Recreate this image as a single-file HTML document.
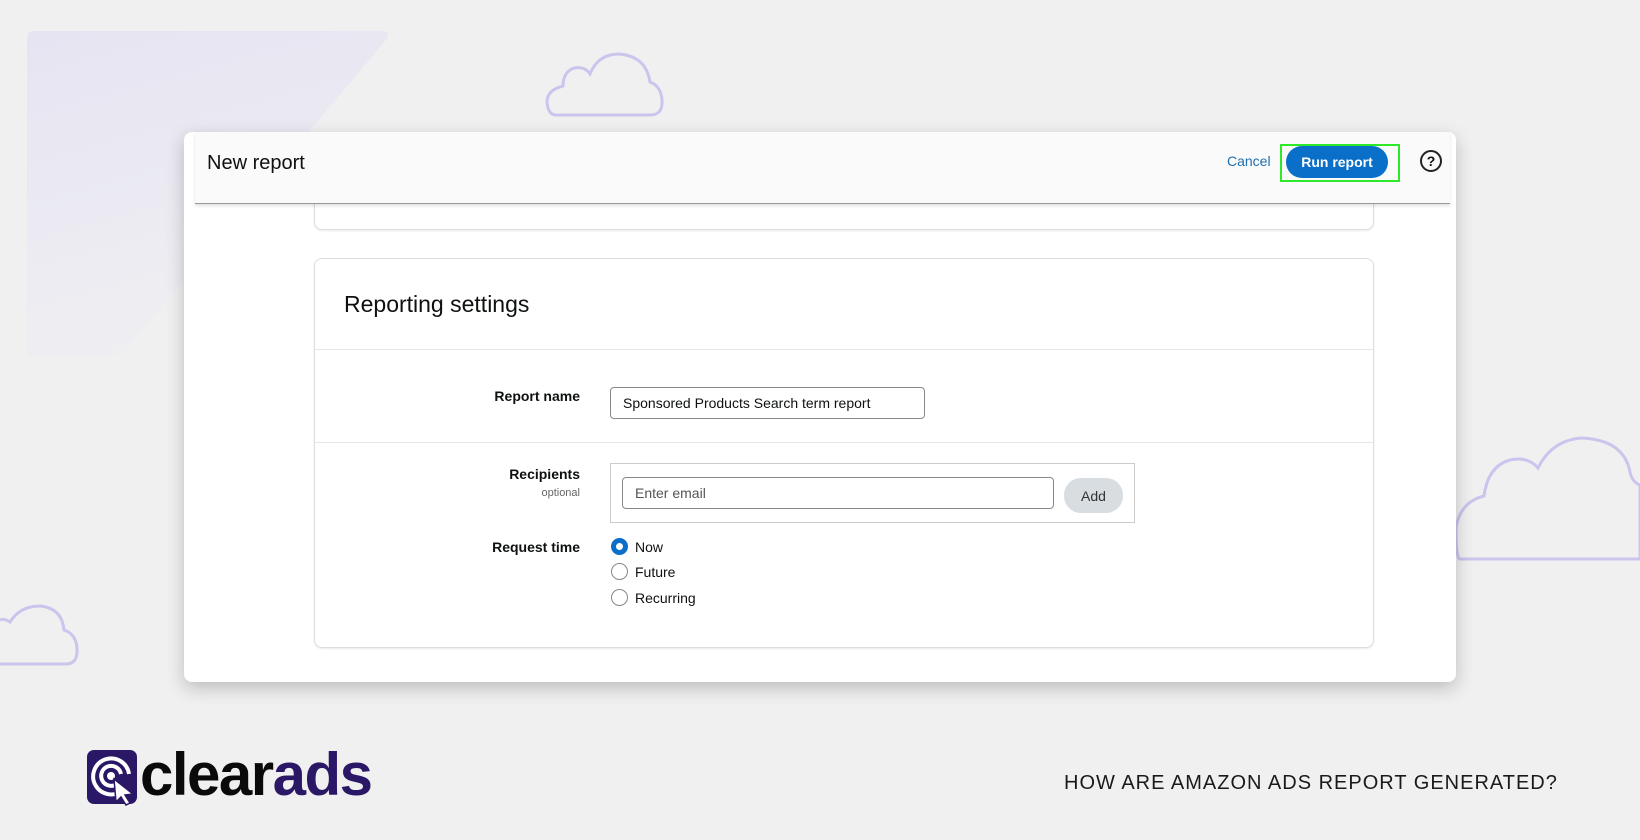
<!DOCTYPE html>
<html><head><meta charset="utf-8"><style>
*{margin:0;padding:0;box-sizing:border-box}
body{width:1640px;height:840px;overflow:hidden;background:#f0f0f0;font-family:"Liberation Sans",sans-serif;position:relative;color:#0f1111}
.abs{position:absolute}
.modal{left:184px;top:132px;width:1272px;height:550px;background:#fff;border-radius:8px;box-shadow:0 6px 18px rgba(0,0,0,.22)}
.hdr{left:195px;top:132px;width:1255px;height:72px;background:#fafafa;border-bottom:1.5px solid #999;box-shadow:0 2px 3px rgba(0,0,0,.12)}
.card{background:#fff;border:1px solid #ddd;border-radius:8px;box-shadow:0 1px 2px rgba(0,0,0,.08)}
.lbl{font-size:14px;font-weight:bold;text-align:right;width:200px;left:380px}
.inp{border:1px solid #888;border-radius:4px;background:#fff;font-size:14px;padding-left:12px;display:flex;align-items:center}
.radio{width:17px;height:17px;border-radius:50%;border:1px solid #888;background:#fff}
.rl{font-size:14px;left:635px}
</style></head><body>
<svg class="abs" style="left:0;top:0" width="1640" height="840">
<defs><linearGradient id="g" x1="0" y1="0" x2="0.3" y2="1"><stop offset="0" stop-color="#e6e4f2"/><stop offset="1" stop-color="#efeff2"/></linearGradient></defs>
<path d="M35 31 H382 Q392 31 386 40 L120 356 H27 V39 Q27 31 35 31Z" fill="url(#g)"/>
<g fill="none" stroke="#cbc5ee" stroke-width="3">
<path d="M556 115 H650 Q663 115 662 100 Q661 86 650 82 Q646 56 619 54 Q598 54 590 74 Q585 66 574 68 Q563 72 563 86 Q547 90 547 102 Q548 115 556 115Z"/>
<path d="M1460 559 H1640 V485 Q1632 482 1630 472 Q1624 440 1582 438 Q1552 440 1538 468 Q1528 456 1510 460 Q1488 466 1484 496 Q1460 502 1456 528 Q1456 559 1460 559Z"/>
<path d="M0 664 H66 Q78 664 77 648 Q76 634 64 630 Q62 608 40 606 Q20 606 10 622 Q4 618 0 620"/>
</g></svg>
<div class="abs modal"></div>
<div class="abs card" style="left:314px;top:180px;width:1060px;height:50px;border-top:none;border-radius:0 0 8px 8px"></div>
<div class="abs hdr"></div>
<div class="abs" style="left:207px;top:152px;font-size:20px">New report</div>
<div class="abs" style="left:1227px;top:153px;font-size:14px;color:#1f6fb0">Cancel</div>
<div class="abs" style="left:1280px;top:144px;width:120px;height:38px;border:2px solid #2ee82a"></div>
<div class="abs" style="left:1286px;top:146px;width:102px;height:32px;border-radius:16px;background:#0a6fc9;color:#fff;font-size:14px;font-weight:bold;display:flex;align-items:center;justify-content:center">Run report</div>
<div class="abs" style="left:1420px;top:150px;width:22px;height:22px;border:2px solid #222;border-radius:50%;font-size:14px;font-weight:bold;text-align:center;line-height:18px">?</div>
<div class="abs card" style="left:314px;top:258px;width:1060px;height:390px"></div>
<div class="abs" style="left:344px;top:291px;font-size:23px">Reporting settings</div>
<div class="abs" style="left:315px;top:349px;width:1058px;height:1px;background:#e7e7e7"></div>
<div class="abs" style="left:315px;top:442px;width:1058px;height:1px;background:#e7e7e7"></div>
<div class="abs lbl" style="top:388px">Report name</div>
<div class="abs inp" style="left:610px;top:387px;width:315px;height:32px">Sponsored Products Search term report</div>
<div class="abs lbl" style="top:466px">Recipients</div>
<div class="abs" style="left:380px;top:487px;width:200px;text-align:right;font-size:11px;color:#666">optional</div>
<div class="abs" style="left:610px;top:463px;width:525px;height:60px;border:1px solid #ccc"></div>
<div class="abs inp" style="left:622px;top:477px;width:432px;height:32px;color:#555">Enter email</div>
<div class="abs" style="left:1064px;top:478px;width:59px;height:35px;border-radius:17px;background:#d8dde2;font-size:14px;display:flex;align-items:center;justify-content:center;color:#333">Add</div>
<div class="abs lbl" style="top:539px">Request time</div>
<div class="abs radio" style="left:611px;top:538px;border:5px solid #0a6fc9"></div>
<div class="abs radio" style="left:611px;top:563px"></div>
<div class="abs radio" style="left:611px;top:589px"></div>
<div class="abs rl" style="top:539px">Now</div>
<div class="abs rl" style="top:564px">Future</div>
<div class="abs rl" style="top:590px">Recurring</div>
<svg class="abs" style="left:87px;top:750px" width="52" height="56" viewBox="0 0 52 56">
<rect x="0" y="0" width="50" height="54" rx="7" fill="#2a1866"/>
<g fill="none" stroke="#fff" stroke-width="4"><path d="M36 40 A18 18 0 1 1 42 24"/><path d="M30 34 A10 10 0 1 1 34 24"/></g>
<circle cx="24" cy="26" r="4" fill="#fff"/>
<path d="M27 29 L46 44 L38 45 L43 53 L39 55 L34 47 L29 52Z" fill="#fff" stroke="#2a1866" stroke-width="1.5"/>
</svg>
<div class="abs" style="left:140px;top:742px;font-size:60px;font-weight:bold;letter-spacing:-1.5px;line-height:66px"><span style="color:#0a0a0a">clear</span><span style="color:#2a1866">ads</span></div>
<div class="abs" style="left:1064px;top:772px;font-size:20px;color:#1a1a1a;letter-spacing:1px">HOW ARE AMAZON ADS REPORT GENERATED?</div>
</body></html>
